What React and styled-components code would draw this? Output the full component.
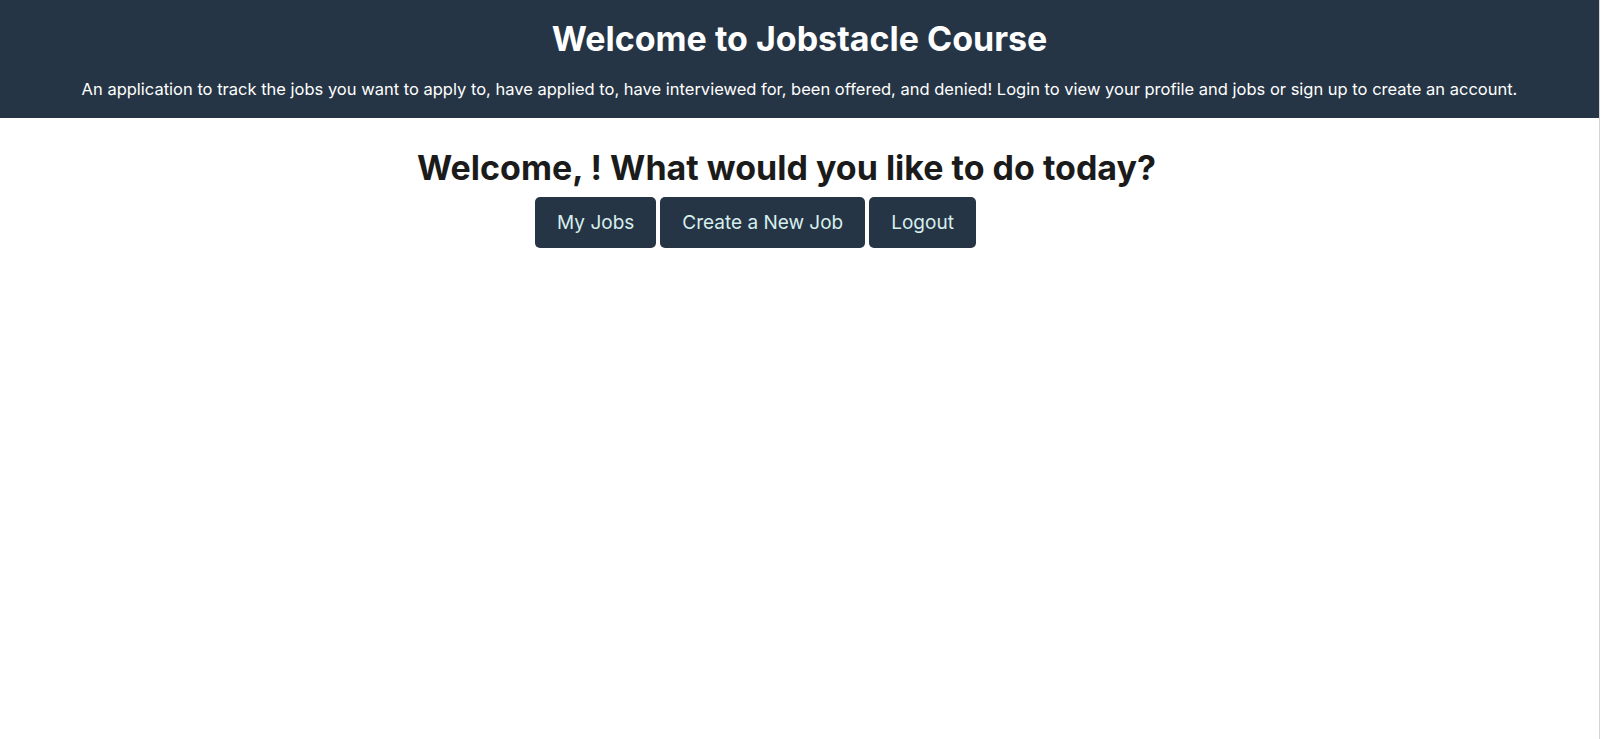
import React from "react";
import styled, { createGlobalStyle } from "styled-components";

const Global = createGlobalStyle`
  html, body { margin: 0; padding: 0; background: #fff; }
  body { font-family: Inter, "Noto Sans", sans-serif; }
  #root { border-right: 1px solid #d4d4d4; width: 1600px; box-sizing: border-box; min-height: 739px; }
`;

const Header = styled.header`
  background: #263545;
  color: #ffffff;
  text-align: center;
  padding: 19px 0 19px;
`;

const Title = styled.h1`
  margin: 0;
  font-size: 34px;
  font-weight: 700;
  line-height: 40px;
`;

const Subtitle = styled.p`
  margin: 20px 0 0;
  font-size: 16.5px;
  line-height: 20px;
  font-weight: 400;
`;

const Main = styled.main`
  display: flex;
  flex-direction: column;
  align-items: center;
  padding-top: 30px;
`;

const Heading = styled.h2`
  margin: 0;
  padding-right: 26px;
  font-size: 34px;
  font-weight: 700;
  line-height: 40px;
  color: #1b1b1b;
`;

const ButtonRow = styled.div`
  display: flex;
  gap: 4px;
  margin-top: 9px;
  padding-right: 88px;
`;

const Button = styled.button`
  background: #263545;
  color: #d6efee;
  border: none;
  border-radius: 5px;
  height: 51px;
  padding: 0 22px;
  font-family: Inter, "Noto Sans", sans-serif;
  font-size: 19px;
  cursor: pointer;
`;

export default function App() {
  return (
    <>
      <Global />
      <Header>
        <Title>Welcome to Jobstacle Course</Title>
        <Subtitle>
          An application to track the jobs you want to apply to, have applied to, have interviewed for, been offered, and denied! Login to view your profile and jobs or sign up to create an account.
        </Subtitle>
      </Header>
      <Main>
        <Heading>Welcome, ! What would you like to do today?</Heading>
        <ButtonRow>
          <Button>My Jobs</Button>
          <Button>Create a New Job</Button>
          <Button>Logout</Button>
        </ButtonRow>
      </Main>
    </>
  );
}
